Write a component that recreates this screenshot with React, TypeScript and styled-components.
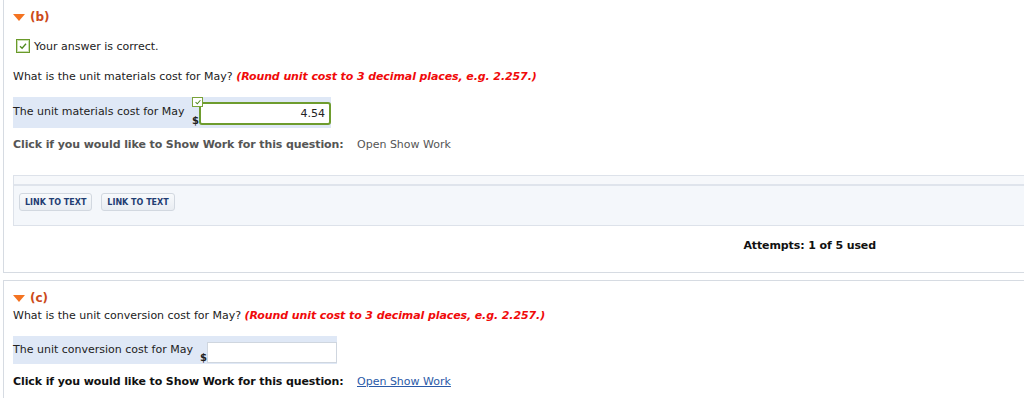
import React from 'react';
import styled, { createGlobalStyle } from 'styled-components';

const GlobalStyle = createGlobalStyle`
  body {
    margin: 0;
    background: #fff;
    font-family: "DejaVu Sans", Verdana, sans-serif;
    font-size: 11px;
    color: #222;
    overflow: hidden;
  }
`;

const Page = styled.div`
  width: 1024px;
  height: 398px;
  overflow: hidden;
  padding-left: 3px;
  box-sizing: border-box;
`;

const Panel = styled.section<{ $top?: boolean; $bottom?: boolean }>`
  border-left: 1px solid #d6dbe2;
  border-bottom: ${(p) => (p.$bottom ? '1px solid #d6dbe2' : 'none')};
  border-top: ${(p) => (p.$top ? '1px solid #d6dbe2' : 'none')};
  padding-left: 9px;
  margin-bottom: 7px;
  width: 1100px;
  min-height: 120px;
`;

const PartHeader = styled.div<{ $pt: number }>`
  display: flex;
  align-items: center;
  gap: 5px;
  padding-top: ${(p) => p.$pt}px;
  height: 14px;
  font-weight: bold;
  color: #cc4a1a;
  font-size: 12px;
`;

const Triangle = styled.span`
  width: 0;
  height: 0;
  border-left: 6px solid transparent;
  border-right: 6px solid transparent;
  border-top: 7px solid #f47321;
`;

const Correct = styled.div`
  display: flex;
  align-items: center;
  gap: 4px;
  margin-top: 14px;
  padding-left: 3px;
  height: 16px;
  color: #222;
`;

const CheckBox = styled.span<{ $size: number }>`
  display: inline-flex;
  align-items: center;
  justify-content: center;
  width: ${(p) => p.$size}px;
  height: ${(p) => p.$size}px;
  box-sizing: border-box;
  border: 1px solid #6a9a2a;
  background: #fff;
  box-shadow: inset 0 0 0 1px #c9deb0;
`;

const Question = styled.div<{ $mt: number }>`
  margin-top: ${(p) => p.$mt}px;
  height: 14px;
  line-height: 14px;
  color: #222;
`;

const Hint = styled.em`
  color: #f00a0a;
  font-weight: bold;
  letter-spacing: -0.1px;
`;

const AnswerRow = styled.div<{ $mt: number; $w: number; $h: number }>`
  display: flex;
  align-items: flex-end;
  margin-top: ${(p) => p.$mt}px;
  width: ${(p) => p.$w}px;
  height: ${(p) => p.$h}px;
  background: #dfe8f6;
`;

const RowLabel = styled.div<{ $pb: number; $w: number }>`
  width: ${(p) => p.$w}px;
  padding-bottom: ${(p) => p.$pb}px;
  color: #222;
`;

const Dollar = styled.span<{ $pb: number }>`
  font-weight: bold;
  font-size: 10px;
  padding-bottom: ${(p) => p.$pb}px;
`;

const InputWrap = styled.div`
  position: relative;
  align-self: stretch;
  display: flex;
  align-items: flex-end;
`;

const Field = styled.input<{ $ok?: boolean; $w: number; $mb: number }>`
  width: ${(p) => p.$w}px;
  height: ${(p) => (p.$ok ? 23 : 21)}px;
  box-sizing: border-box;
  margin: 0 0 ${(p) => p.$mb}px 0;
  border: ${(p) => (p.$ok ? '2px solid #6e9c2e' : '1px solid #cfd6df')};
  border-radius: ${(p) => (p.$ok ? '3px' : '0')};
  background: #fff;
  font-family: "DejaVu Sans", Verdana, sans-serif;
  font-size: 11px;
  text-align: right;
  padding: 0 4px;
  color: #222;
  outline: none;
`;

const MiniCheck = styled.span`
  position: absolute;
  left: -7px;
  top: 0;
  width: 11px;
  height: 10px;
  box-sizing: border-box;
  border: 1px solid #7aa33a;
  background: #fff;
  display: flex;
  align-items: center;
  justify-content: center;
`;

const ShowWork = styled.div<{ $mt: number; $muted?: boolean }>`
  display: flex;
  margin-top: ${(p) => p.$mt}px;
  height: 14px;
  line-height: 14px;
  color: ${(p) => (p.$muted ? '#555' : '#111')};
`;

const ShowLabel = styled.span`
  font-weight: bold;
  letter-spacing: -0.1px;
  width: 344px;
`;

const ShowLink = styled.a<{ $active?: boolean }>`
  color: ${(p) => (p.$active ? '#2a5aa8' : '#555')};
  text-decoration: ${(p) => (p.$active ? 'underline' : 'none')};
`;

const LinkBox = styled.div`
  margin-top: 23px;
  border: 1px solid #dde2ea;
  background: #f4f7fb;
`;

const LinkStrip = styled.div`
  height: 8px;
  border-bottom: 2px solid #dfe4ec;
  background: #f6f8fb;
`;

const LinkBar = styled.div`
  display: flex;
  gap: 9px;
  padding: 7px 0 14px 5px;
`;

const LinkButton = styled.button`
  height: 18px;
  padding: 0 5px;
  border: 1px solid #d2d8e0;
  border-radius: 3px;
  background: linear-gradient(#f8fafc, #e9edf2);
  font-family: "DejaVu Sans", Verdana, sans-serif;
  font-size: 8px;
  font-weight: bold;
  color: #1f3d73;
`;

const Attempts = styled.div`
  width: 1011px;
  box-sizing: border-box;
  text-align: right;
  padding: 13px 148px 0 0;
  height: 46px;
  font-weight: bold;
  letter-spacing: -0.1px;
  color: #111;
`;

function Check({ size }: { size: number }) {
  return (
    <svg width={size} height={size} viewBox="0 0 10 10">
      <path d="M2 5.2 L4.1 7.2 L8 2.8" fill="none" stroke="#4f8a1e" strokeWidth="1.3" />
    </svg>
  );
}

export default function App() {
  return (
    <Page>
      <GlobalStyle />
      <Panel $bottom>
        <PartHeader $pt={10}>
          <Triangle />
          <span>(b)</span>
        </PartHeader>
        <Correct>
          <CheckBox $size={14}>
            <Check size={10} />
          </CheckBox>
          <span>Your answer is correct.</span>
        </Correct>
        <Question $mt={16}>
          What is the unit materials cost for May? <Hint>(Round unit cost to 3 decimal places, e.g. 2.257.)</Hint>
        </Question>
        <AnswerRow $mt={13} $w={318} $h={31}>
          <RowLabel $w={180} $pb={10}>The unit materials cost for May</RowLabel>
          <Dollar $pb={2}>$</Dollar>
          <InputWrap>
            <MiniCheck>
              <Check size={8} />
            </MiniCheck>
            <Field $ok $w={132} $mb={3} defaultValue="4.54" readOnly />
          </InputWrap>
        </AnswerRow>
        <ShowWork $mt={10} $muted>
          <ShowLabel>Click if you would like to Show Work for this question:</ShowLabel>
          <ShowLink>Open Show Work</ShowLink>
        </ShowWork>
        <LinkBox>
          <LinkStrip />
          <LinkBar>
            <LinkButton>LINK TO TEXT</LinkButton>
            <LinkButton>LINK TO TEXT</LinkButton>
          </LinkBar>
        </LinkBox>
        <Attempts>Attempts: 1 of 5 used</Attempts>
      </Panel>
      <Panel $top>
        <PartHeader $pt={10}>
          <Triangle />
          <span>(c)</span>
        </PartHeader>
        <Question $mt={4}>
          What is the unit conversion cost for May? <Hint>(Round unit cost to 3 decimal places, e.g. 2.257.)</Hint>
        </Question>
        <AnswerRow $mt={13} $w={324} $h={28}>
          <RowLabel $w={187} $pb={8}>The unit conversion cost for May</RowLabel>
          <Dollar $pb={1}>$</Dollar>
          <InputWrap>
            <Field $w={130} $mb={1} />
          </InputWrap>
        </AnswerRow>
        <ShowWork $mt={11}>
          <ShowLabel>Click if you would like to Show Work for this question:</ShowLabel>
          <ShowLink $active href="#">Open Show Work</ShowLink>
        </ShowWork>
      </Panel>
    </Page>
  );
}
